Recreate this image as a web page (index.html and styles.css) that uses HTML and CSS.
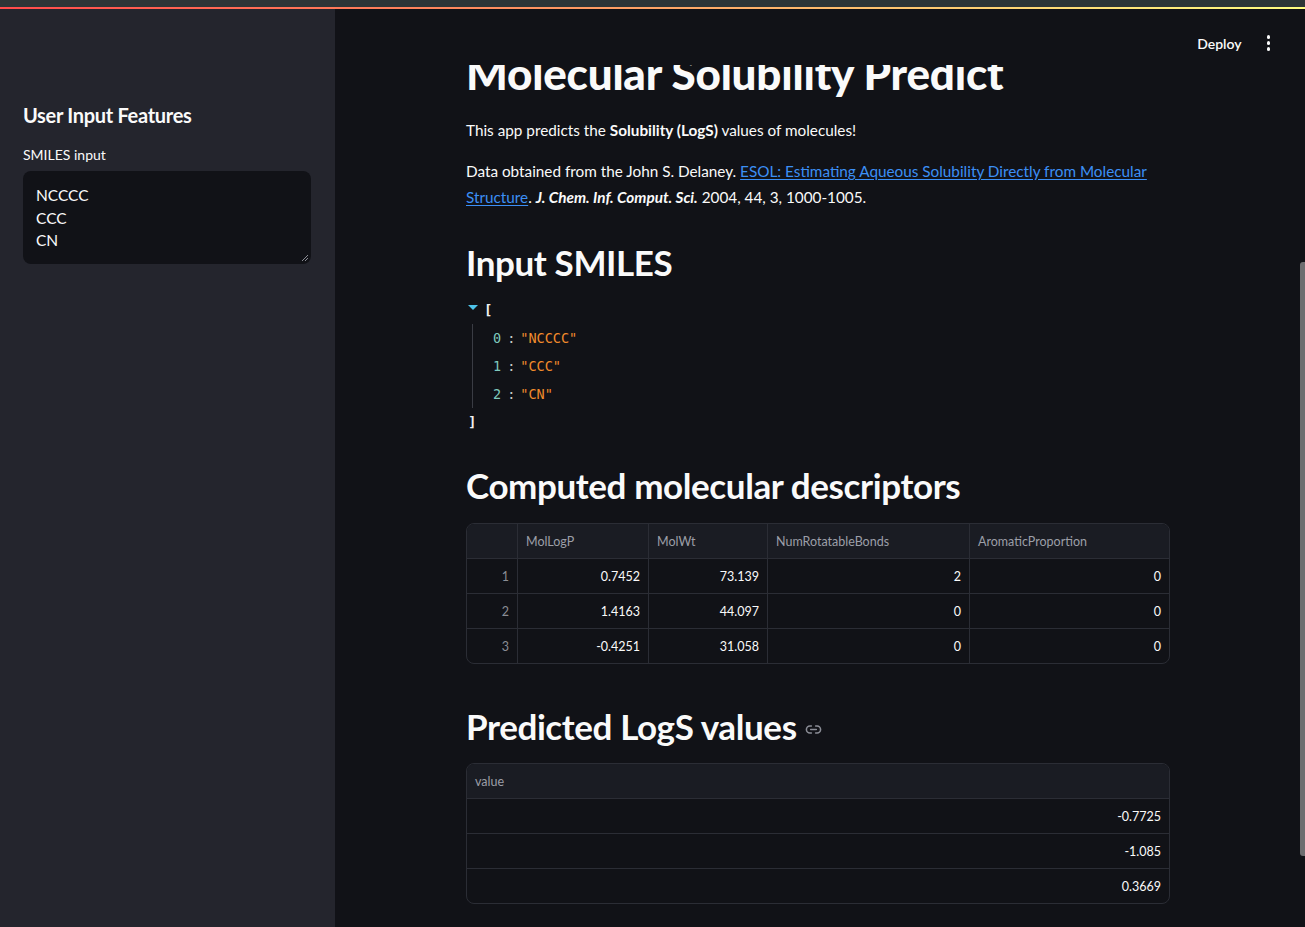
FILE: index.html
```html
<!DOCTYPE html>
<html>
<head>
<meta charset="utf-8">
<link rel="stylesheet" href="styles.css">
</head>
<body>
<div class="chrome"></div>
<div class="decoration"></div>
<div class="app">
  <aside class="sidebar">
    <h3 class="side-title">User Input Features</h3>
    <label class="side-label">SMILES input</label>
    <div class="textarea">
      <div>NCCCC</div>
      <div>CCC</div>
      <div>CN</div>
      <svg class="grip" width="8" height="8" viewBox="0 0 8 8"><path d="M1 7L7 1M4 7L7 4" stroke="#8a8c94" stroke-width="1"/></svg>
    </div>
  </aside>
  <main class="main">
    <div class="content">
      <h1 class="title">Molecular Solubility Predict</h1>
      <p class="p1">This app predicts the <b>Solubility (LogS)</b> values of molecules!</p>
      <p class="p2">Data obtained from the John S. Delaney. <a href="#">ESOL: Estimating Aqueous Solubility Directly from Molecular Structure</a>. <b><i>J. Chem. Inf. Comput. Sci.</i></b> 2004, 44, 3, 1000-1005.</p>
      <h2 class="h2 h-input">Input SMILES</h2>
      <div class="json">
        <div class="jrow"><span class="caret"></span><span class="br">[</span></div>
        <div class="jbody">
          <div class="jrow"><span class="ji">0</span><span class="jc">:</span><span class="js">"NCCCC"</span></div>
          <div class="jrow"><span class="ji">1</span><span class="jc">:</span><span class="js">"CCC"</span></div>
          <div class="jrow"><span class="ji">2</span><span class="jc">:</span><span class="js">"CN"</span></div>
        </div>
        <div class="jrow"><span class="br close">]</span></div>
      </div>
      <h2 class="h2 h-comp">Computed molecular descriptors</h2>
      <div class="table t1">
        <div class="tr th">
          <div class="c ci"></div>
          <div class="c c1">MolLogP</div>
          <div class="c c2">MolWt</div>
          <div class="c c3">NumRotatableBonds</div>
          <div class="c c4">AromaticProportion</div>
        </div>
        <div class="tr">
          <div class="c ci">1</div>
          <div class="c c1 n">0.7452</div>
          <div class="c c2 n">73.139</div>
          <div class="c c3 n">2</div>
          <div class="c c4 n">0</div>
        </div>
        <div class="tr">
          <div class="c ci">2</div>
          <div class="c c1 n">1.4163</div>
          <div class="c c2 n">44.097</div>
          <div class="c c3 n">0</div>
          <div class="c c4 n">0</div>
        </div>
        <div class="tr last">
          <div class="c ci">3</div>
          <div class="c c1 n">-0.4251</div>
          <div class="c c2 n">31.058</div>
          <div class="c c3 n">0</div>
          <div class="c c4 n">0</div>
        </div>
      </div>
      <h2 class="h2 h-pred">Predicted LogS values <svg class="link" width="17" height="17" viewBox="0 0 24 24" fill="none" stroke="#8b8d96" stroke-width="2.2" stroke-linecap="round" stroke-linejoin="round"><path d="M15 7h2a5 5 0 0 1 0 10h-2M9 17H7A5 5 0 0 1 7 7h2M8 12h8"/></svg></h2>
      <div class="table t2">
        <div class="tr th"><div class="c cv">value</div></div>
        <div class="tr"><div class="c cv n">-0.7725</div></div>
        <div class="tr"><div class="c cv n">-1.085</div></div>
        <div class="tr last"><div class="c cv n">0.3669</div></div>
      </div>
    </div>
    <header class="header">
      <span class="deploy">Deploy</span>
      <span class="kebab"><i></i><i></i><i></i></span>
    </header>
    <div class="scrollthumb"></div>
  </main>
</div>
</body>
</html>
```
FILE: styles.css
```css
* { box-sizing: border-box; }
html, body { margin: 0; padding: 0; }
body {
  width: 1305px;
  height: 927px;
  overflow: hidden;
  background: #111217;
  font-family: "Lato", "Noto Sans", sans-serif;
  color: #fafafa;
}
.chrome { height: 7px; background: #2d3537; }
.decoration { height: 2px; background: linear-gradient(90deg, #ff4b4b, #fffd80); }
.app { display: flex; height: 918px; }
.sidebar {
  width: 335px;
  flex: none;
  background: #24252d;
  padding: 0 24px 0 23px;
}
.side-title {
  margin: 93px 0 0;
  font-size: 20px;
  line-height: 26px;
  font-weight: 700;
  letter-spacing: -0.3px;
}
.side-label {
  display: block;
  margin-top: 17px;
  font-size: 14px;
  line-height: 20px;
}
.textarea {
  position: relative;
  margin-top: 6px;
  height: 93px;
  width: 288px;
  background: #111217;
  border-radius: 8px;
  padding: 13px 13px;
  font-size: 15.5px;
  line-height: 22.5px;
}
.grip { position: absolute; right: 2px; bottom: 2px; }
.main { position: relative; flex: 1; overflow: hidden; }
.content {
  width: 704px;
  margin-left: 131px;
}
.title {
  margin: 38px 0 0;
  font-size: 44px;
  line-height: 52px;
  font-weight: 900;
  letter-spacing: -0.2px;
}
p { margin: 0; font-size: 15.3px; line-height: 26px; }
.p1 { margin-top: 18px; }
.p2 { margin-top: 15px; }
a { color: #3c8ff5; text-decoration: underline; text-underline-offset: 2px; }
.h2 {
  margin: 0;
  font-size: 35px;
  line-height: 44px;
  font-weight: 700;
  letter-spacing: -0.4px;
  display: flex;
  align-items: center;
}
.h-input { margin-top: 30px; }
.json {
  margin-top: 12px;
  font-family: "DejaVu Sans Mono", monospace;
  font-size: 13.5px;
}
.jrow { height: 28px; display: flex; align-items: center; }
.caret {
  width: 0; height: 0;
  border-left: 5px solid transparent;
  border-right: 5px solid transparent;
  border-top: 5px solid #4ec3ea;
  margin-left: 2px;
  margin-right: 6px;
  position: relative;
  top: -3px;
}
.br { color: #f0f0f0; font-weight: 700; font-size: 14px; }
.close { margin-left: 2px; }
.jbody { margin-left: 6px; border-left: 1px solid #3a3c44; padding-left: 20px; }
.ji { color: #7fc9bd; }
.jc { color: #c8c8c8; margin: 0 5px 0 6px; }
.js { color: #f28b2c; }
.h-comp { margin-top: 27px; }
.table {
  margin-top: 16px;
  border: 1px solid #2b2d35;
  border-radius: 8px;
  overflow: hidden;
  font-family: "Lato", "Noto Sans", sans-serif;
  font-size: 12.5px;
}
.tr { display: flex; height: 35px; border-bottom: 1px solid #2b2d35; }
.tr.last { border-bottom: none; height: 34px; }
.th { background: #1a1c23; color: #9c9fa8; }
.c {
  display: flex;
  align-items: center;
  padding: 0 8px;
  border-right: 1px solid #2b2d35;
}
.c:last-child { border-right: none; }
.ci { width: 51px; justify-content: flex-end; color: #8b8d95; padding-right: 8px; }
.th .ci { justify-content: flex-start; }
.c1 { width: 131px; }
.c2 { width: 119px; }
.c3 { width: 202px; }
.c4 { flex: 1; }
.cv { flex: 1; }
.n { justify-content: flex-end; color: #fafafa; }
.h-pred { margin-top: 40px; }
.link { margin-left: 8px; margin-top: 6px; }
.t2 { margin-top: 15px; }
.header {
  position: absolute;
  top: 0; left: 0; right: 0;
  height: 56px;
  background: #111217;
  display: flex;
  align-items: center;
  justify-content: flex-end;
  padding-right: 35px;
  padding-top: 12px;
}
.deploy { font-size: 14px; font-weight: 600; margin-right: 25px; }
.kebab { display: flex; flex-direction: column; gap: 2.5px; }
.kebab i { display: block; width: 3.5px; height: 3.5px; background: #fafafa; border-radius: 50%; }
.scrollthumb {
  position: absolute;
  right: 0;
  top: 253px;
  width: 5px;
  height: 594px;
  background: #6e6e70;
  border-radius: 3px 0 0 3px;
}
```
